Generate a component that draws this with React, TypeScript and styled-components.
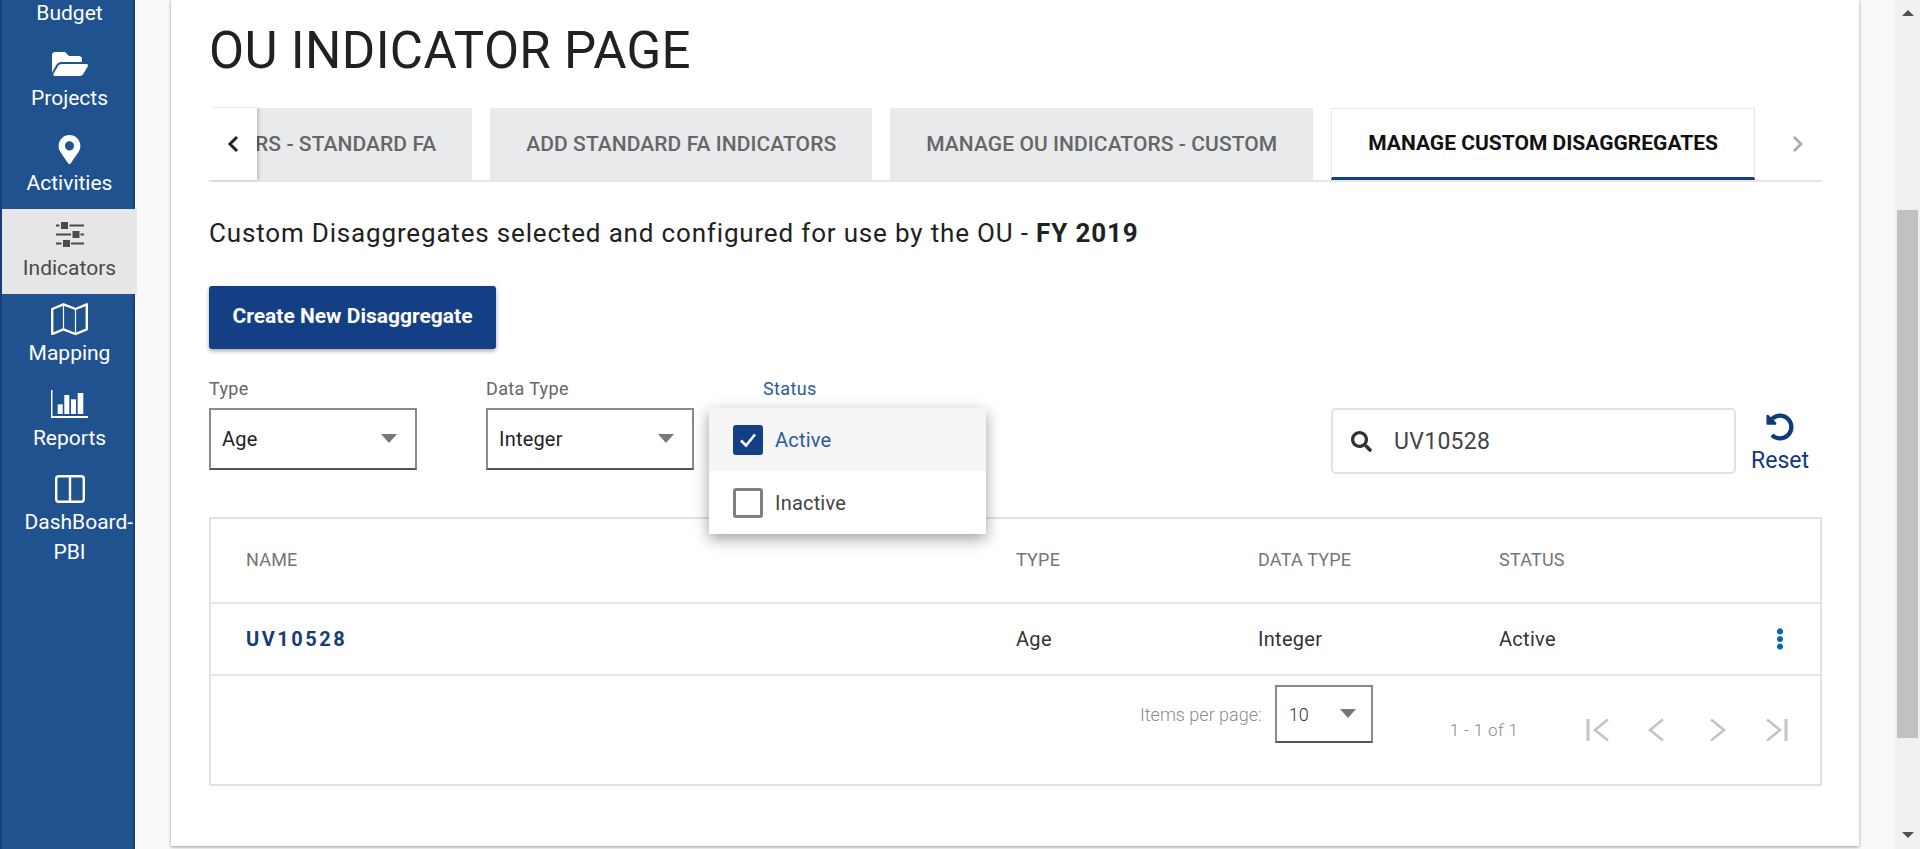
import React from "react";
import styled, { createGlobalStyle } from "styled-components";
import { FaFolderOpen, FaMapMarkerAlt, FaSearch, FaUndoAlt, FaEllipsisV } from "react-icons/fa";

const Global = createGlobalStyle`
  html, body {
    margin: 0;
    padding: 0;
    overflow: hidden;
  }
  body {
    font-family: Roboto, "Liberation Sans", sans-serif;
    color: #212121;
  }
`;

const Shell = styled.div`
  display: flex;
  height: 849px;
  overflow: hidden;
  background: #f9f9f9;
`;

const Sidebar = styled.nav`
  width: 135px;
  flex-shrink: 0;
  box-sizing: border-box;
  background: #20528f;
  border-left: 2px solid #163f75;
  border-right: 2px solid #163f75;
`;

const NavItem = styled.div<{ $active?: boolean; $cut?: boolean }>`
  box-sizing: border-box;
  width: 135px;
  height: ${(p) => (p.$cut ? "39px" : "85px")};
  display: flex;
  flex-direction: column;
  align-items: center;
  justify-content: ${(p) => (p.$cut ? "flex-end" : "flex-start")};
  background: ${(p) => (p.$active ? "#e6e6e6" : "transparent")};
  color: ${(p) => (p.$active ? "#4a4a4a" : "#fff")};
  padding-bottom: ${(p) => (p.$cut ? "11px" : "0")};
  position: relative;
`;

const NavIcon = styled.div`
  height: 36px;
  flex-shrink: 0;
  margin-top: 7px;
  display: flex;
  align-items: center;
  justify-content: center;
`;

const NavLabel = styled.div<{ $narrow?: boolean }>`
  flex-shrink: 0;
  font-size: 21px;
  line-height: 30px;
  text-align: center;
  margin-top: ${(p) => (p.$narrow ? "0" : "1px")};
  width: ${(p) => (p.$narrow ? "90px" : "131px")};
`;

const Main = styled.main`
  flex: 1;
  min-width: 0;
  padding: 0 36px;
`;

const Card = styled.section`
  height: 846px;
  box-sizing: border-box;
  background: #fff;
  box-shadow: 0 1px 3px rgba(0, 0, 0, 0.4);
  padding: 23px 37px 0 38px;
`;

const Title = styled.h1`
  margin: 0;
  font-size: 51px;
  line-height: 56px;
  font-weight: 400;
  color: #212121;
  letter-spacing: 0.35px;
`;

const TabBar = styled.div`
  margin-top: 29px;
  height: 74px;
  box-sizing: border-box;
  display: flex;
  border-bottom: 2px solid #e6e6e6;
`;

const TabArrow = styled.div<{ $off?: boolean }>`
  width: ${(p) => (p.$off ? "67px" : "48px")};
  box-sizing: border-box;
  padding-left: ${(p) => (p.$off ? "19px" : "0")};
  flex-shrink: 0;
  display: flex;
  align-items: center;
  justify-content: center;
  position: relative;
  z-index: 1;
  background: #fff;
  box-shadow: ${(p) => (p.$off ? "none" : "2px 0 3px rgba(0, 0, 0, 0.18)")};
  color: ${(p) => (p.$off ? "#a8a8a8" : "#222")};
`;

const TabStrip = styled.div`
  flex: 1;
  min-width: 0;
  display: flex;
  justify-content: flex-end;
  gap: 18px;
  overflow: hidden;
`;

const Tab = styled.div<{ $active?: boolean }>`
  flex-shrink: 0;
  height: 72px;
  box-sizing: border-box;
  padding: 0 36px;
  display: flex;
  align-items: center;
  white-space: nowrap;
  font-size: 21px;
  letter-spacing: ${(p) => (p.$active ? "0" : "0.07px")};
  font-weight: ${(p) => (p.$active ? 700 : 500)};
  color: ${(p) => (p.$active ? "#111" : "#666")};
  background: ${(p) => (p.$active ? "#fff" : "#e9eaec")};
  border: ${(p) => (p.$active ? "1px solid #e6e6e6" : "none")};
  border-bottom: ${(p) => (p.$active ? "3px solid #153f85" : "none")};
`;

const Heading = styled.p`
  margin: 36px 0 0;
  font-size: 26px;
  line-height: 30px;
  letter-spacing: 0.83px;
  color: #212121;
  b {
    font-weight: 700;
  }
`;

const PrimaryButton = styled.button`
  display: block;
  margin-top: 38px;
  width: 287px;
  height: 63px;
  padding: 0 0 3px;
  border: 0;
  border-radius: 3px;
  background: #153f85;
  color: #fff;
  font-family: inherit;
  font-size: 21px;
  font-weight: 700;
  box-shadow: 0 2px 4px rgba(0, 0, 0, 0.35);
`;

const Filters = styled.div`
  margin-top: 30px;
  display: flex;
  align-items: flex-start;
`;

const Field = styled.div<{ $width: number; $gap: number }>`
  position: relative;
  width: ${(p) => p.$width}px;
  margin-right: ${(p) => p.$gap}px;
`;

const FieldLabel = styled.div<{ $focus?: boolean }>`
  font-size: 18px;
  line-height: 20px;
  margin-bottom: 9px;
  letter-spacing: 0.35px;
  color: ${(p) => (p.$focus ? "#2c5a9e" : "#666")};
`;

const SelectBox = styled.div`
  box-sizing: border-box;
  height: 62px;
  padding: 0 18px 0 11px;
  display: flex;
  align-items: center;
  justify-content: space-between;
  border: 2px solid #8a8a8a;
  border-bottom-color: #555;
  font-size: 20px;
  letter-spacing: 0.2px;
  color: #222;
`;

const Caret = styled.span`
  width: 0;
  height: 0;
  border-left: 8px solid transparent;
  border-right: 8px solid transparent;
  border-top: 9px solid #777;
  margin-top: -2px;
`;

const Menu = styled.div`
  position: absolute;
  left: -54px;
  top: 29px;
  width: 277px;
  background: #fff;
  z-index: 5;
  box-shadow: 0 5px 14px rgba(0, 0, 0, 0.38);
`;

const MenuRow = styled.div<{ $on?: boolean }>`
  height: 63px;
  display: flex;
  align-items: center;
  padding-left: 24px;
  gap: 12px;
  font-size: 20px;
  letter-spacing: 0.2px;
  background: ${(p) => (p.$on ? "#f5f5f5" : "#fff")};
  color: ${(p) => (p.$on ? "#2c5a9e" : "#444")};
`;

const CheckBox = styled.span<{ $on?: boolean }>`
  box-sizing: border-box;
  width: 30px;
  height: 30px;
  border-radius: 3px;
  display: flex;
  align-items: center;
  justify-content: center;
  background: ${(p) => (p.$on ? "#153f85" : "#fff")};
  border: 3px solid ${(p) => (p.$on ? "#153f85" : "#808080")};
`;

const SearchBox = styled.div`
  box-sizing: border-box;
  margin: 29px 0 0 auto;
  width: 405px;
  height: 66px;
  border: 2px solid #e2e2e2;
  border-radius: 5px;
  display: flex;
  align-items: center;
  padding-left: 18px;
  gap: 22px;
  font-size: 23px;
  letter-spacing: 0.3px;
  color: #444;
`;

const ResetButton = styled.div`
  width: 60px;
  margin: 34px 12px 0 14px;
  display: flex;
  flex-direction: column;
  align-items: center;
  gap: 7px;
  color: #0f3a7d;
  font-size: 23px;
  line-height: 26px;
`;

const Table = styled.div`
  margin-top: 43px;
  box-sizing: border-box;
  height: 269px;
  border: 2px solid #e2e2e2;
  display: flex;
  flex-direction: column;
`;

const TableRow = styled.div<{ $head?: boolean }>`
  box-sizing: border-box;
  height: ${(p) => (p.$head ? "85px" : "72px")};
  display: grid;
  grid-template-columns: 770px 242px 241px 1fr 56px;
  align-items: center;
  padding-left: 35px;
  padding-bottom: ${(p) => (p.$head ? "2px" : "0")};
  border-bottom: 2px solid #e6e6e6;
  font-size: ${(p) => (p.$head ? "18px" : "20px")};
  letter-spacing: ${(p) => (p.$head ? "0.2px" : "0.3px")};
  color: ${(p) => (p.$head ? "#757575" : "#333")};
`;

const NameLink = styled.span`
  font-weight: 700;
  letter-spacing: 2.5px;
  font-size: 20px;
  color: #173c7a;
`;

const RowMenu = styled.span`
  color: #0a66b5;
  display: flex;
  justify-content: flex-start;
  margin-left: 5px;
`;

const Pager = styled.div`
  flex: 1;
  display: flex;
  align-items: flex-start;
  color: #8c8c8c;
`;

const PerPage = styled.div`
  margin: 9px 0 0 929px;
  display: flex;
  align-items: center;
  gap: 13px;
  font-size: 18px;
  font-weight: 300;
`;

const PerPageSelect = styled.div`
  box-sizing: border-box;
  width: 98px;
  height: 58px;
  padding: 0 15px 0 12px;
  display: flex;
  align-items: center;
  justify-content: space-between;
  border: 2px solid #8a8a8a;
  border-bottom-color: #555;
  font-size: 18px;
  color: #333;
`;

const PageCount = styled.div`
  margin: 42px 0 0 77px;
  font-size: 17px;
  font-weight: 300;
  line-height: 24px;
  letter-spacing: 0.35px;
  width: 133px;
`;

const PageButtons = styled.div`
  margin-top: 41px;
  display: flex;
  gap: 29px;
  color: #c4c4c4;
`;

const ScrollTrack = styled.div`
  width: 25px;
  flex-shrink: 0;
  background: #f1f1f1;
  display: flex;
  flex-direction: column;
  align-items: center;
`;

const ScrollUp = styled.div`
  margin-top: 10px;
  width: 0;
  height: 0;
  border-left: 6px solid transparent;
  border-right: 6px solid transparent;
  border-bottom: 6px solid #505050;
`;

const ScrollThumb = styled.div`
  width: 21px;
  height: 528px;
  margin-top: 194px;
  background: #c1c1c1;
`;

const ScrollDown = styled.div`
  margin-top: 94px;
  width: 0;
  height: 0;
  border-left: 6px solid transparent;
  border-right: 6px solid transparent;
  border-top: 6px solid #505050;
`;

const SlidersIcon = () => (
  <svg width="28" height="25" viewBox="0 0 28 25" fill="currentColor">
    <path d="M0 2.6h3.5v2H0zM13.5 2.6H28v2H13.5zM0 11.6h15v2H0zM24.5 11.6H28v2h-3.5zM0 20.6h5.5v2H0zM15 20.6h13v2H15z" />
    <rect x="5" y="0" width="7" height="7" />
    <rect x="16.5" y="9" width="7" height="7" />
    <rect x="7" y="18" width="7" height="7" />
  </svg>
);

const MapIcon = () => (
  <svg width="37" height="32" viewBox="0 0 37 32" fill="none" stroke="currentColor" strokeWidth="2.4">
    <path d="M1.2 6 12.5 1.3l12 4.7 11.3-4.7v25L24.5 31l-12-4.7L1.2 31z" strokeLinejoin="round" />
    <path d="M12.5 1.3v25M24.5 6v25" strokeWidth="1.2" />
  </svg>
);

const ChartIcon = () => (
  <svg width="37" height="28" viewBox="0 0 37 28" fill="currentColor">
    <rect x="0" y="0" width="1.5" height="28" />
    <rect x="0" y="26" width="37" height="2" />
    <rect x="6.7" y="14.3" width="5" height="9.7" />
    <rect x="13.3" y="5" width="5" height="19" />
    <rect x="20" y="9.3" width="5" height="14.7" />
    <rect x="26.7" y="3" width="5.6" height="21" />
  </svg>
);

const ColumnsIcon = () => (
  <svg width="30" height="28" viewBox="0 0 30 28" fill="none" stroke="currentColor" strokeWidth="2.4">
    <rect x="1.2" y="1.2" width="27.6" height="25.6" rx="2.5" />
    <path d="M15 1.2v25.6" />
  </svg>
);

const Chevron = ({ dir, width = 2.6 }: { dir: "left" | "right"; width?: number }) => (
  <svg width="14" height="20" viewBox="0 0 14 20" fill="none" stroke="currentColor" strokeWidth={width}>
    <path d={dir === "left" ? "M11 3 4 10l7 7" : "M3 3l7 7-7 7"} />
  </svg>
);

const PageIcon = ({ d, bar }: { d: string; bar?: number }) => (
  <svg width="32" height="26" viewBox="0 0 32 26" fill="none" stroke="currentColor" strokeWidth="2.6">
    {bar !== undefined && <path d={`M${bar} 2v22`} strokeWidth="3" />}
    <path d={d} />
  </svg>
);

function App() {
  return (
    <Shell>
      <Global />
      <Sidebar>
        <NavItem $cut>
          <NavLabel>Budget</NavLabel>
        </NavItem>
        <NavItem>
          <NavIcon>
            <FaFolderOpen size={36} />
          </NavIcon>
          <NavLabel>Projects</NavLabel>
        </NavItem>
        <NavItem>
          <NavIcon>
            <FaMapMarkerAlt size={29} />
          </NavIcon>
          <NavLabel>Activities</NavLabel>
        </NavItem>
        <NavItem $active>
          <NavIcon>
            <SlidersIcon />
          </NavIcon>
          <NavLabel>Indicators</NavLabel>
        </NavItem>
        <NavItem>
          <NavIcon>
            <MapIcon />
          </NavIcon>
          <NavLabel>Mapping</NavLabel>
        </NavItem>
        <NavItem>
          <NavIcon>
            <ChartIcon />
          </NavIcon>
          <NavLabel>Reports</NavLabel>
        </NavItem>
        <NavItem>
          <NavIcon>
            <ColumnsIcon />
          </NavIcon>
          <NavLabel $narrow>DashBoard-PBI</NavLabel>
        </NavItem>
      </Sidebar>

      <Main>
        <Card>
          <Title>OU INDICATOR PAGE</Title>

          <TabBar>
            <TabArrow>
              <Chevron dir="left" width={3} />
            </TabArrow>
            <TabStrip>
              <Tab>MANAGE OU INDICATORS - STANDARD FA</Tab>
              <Tab>ADD STANDARD FA INDICATORS</Tab>
              <Tab>MANAGE OU INDICATORS - CUSTOM</Tab>
              <Tab $active>MANAGE CUSTOM DISAGGREGATES</Tab>
            </TabStrip>
            <TabArrow $off>
              <Chevron dir="right" />
            </TabArrow>
          </TabBar>

          <Heading>
            Custom Disaggregates selected and configured for use by the OU - <b>FY 2019</b>
          </Heading>

          <PrimaryButton>Create New Disaggregate</PrimaryButton>

          <Filters>
            <Field $width={208} $gap={69}>
              <FieldLabel>Type</FieldLabel>
              <SelectBox>
                Age
                <Caret />
              </SelectBox>
            </Field>
            <Field $width={208} $gap={69}>
              <FieldLabel>Data Type</FieldLabel>
              <SelectBox>
                Integer
                <Caret />
              </SelectBox>
            </Field>
            <Field $width={208} $gap={0}>
              <FieldLabel $focus>Status</FieldLabel>
              <Menu>
                <MenuRow $on>
                  <CheckBox $on>
                    <svg width="20" height="18" viewBox="0 0 20 18" fill="none" stroke="#fff" strokeWidth="2.6">
                      <path d="M3 9.5 8 14.5 17 3.5" />
                    </svg>
                  </CheckBox>
                  Active
                </MenuRow>
                <MenuRow>
                  <CheckBox />
                  Inactive
                </MenuRow>
              </Menu>
            </Field>
            <SearchBox>
              <FaSearch size={21} color="#333" />
              UV10528
            </SearchBox>
            <ResetButton>
              <FaUndoAlt size={28} />
              Reset
            </ResetButton>
          </Filters>

          <Table>
            <TableRow $head>
              <span>NAME</span>
              <span>TYPE</span>
              <span>DATA TYPE</span>
              <span>STATUS</span>
            </TableRow>
            <TableRow>
              <NameLink>UV10528</NameLink>
              <span>Age</span>
              <span>Integer</span>
              <span>Active</span>
              <RowMenu>
                <FaEllipsisV size={22} />
              </RowMenu>
            </TableRow>
            <Pager>
              <PerPage>
                Items per page:
                <PerPageSelect>
                  10
                  <Caret />
                </PerPageSelect>
              </PerPage>
              <PageCount>1 - 1 of 1</PageCount>
              <PageButtons>
                <PageIcon d="M25 2.5 12 13l13 10.5" bar={5} />
                <PageIcon d="M19 2.5 6 13l13 10.5" />
                <PageIcon d="M6 2.5 19 13 6 23.5" />
                <PageIcon d="M1 2.5 14 13 1 23.5" bar={20} />
              </PageButtons>
            </Pager>
          </Table>
        </Card>
      </Main>

      <ScrollTrack>
        <ScrollUp />
        <ScrollThumb />
        <ScrollDown />
      </ScrollTrack>
    </Shell>
  );
}

export default App;
